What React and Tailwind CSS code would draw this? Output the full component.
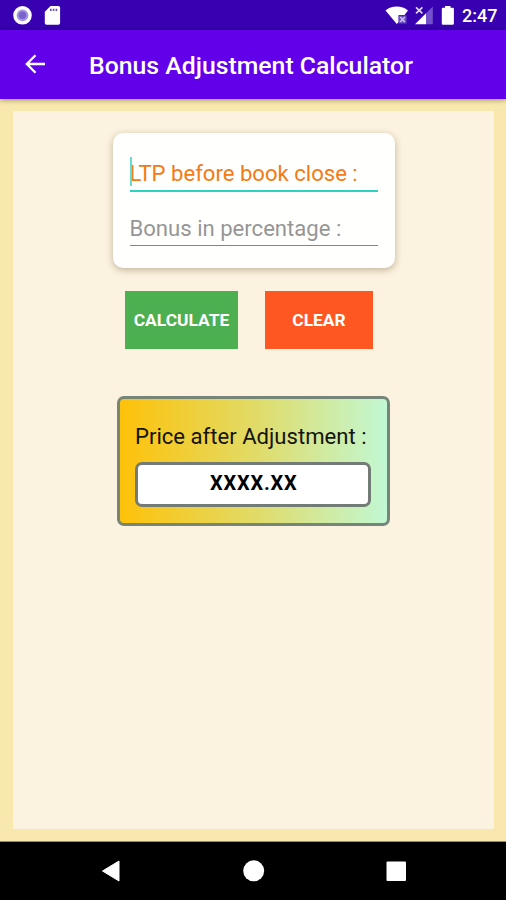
function StatusBar() {
  return (
    <div className="flex h-[30px] shrink-0 items-center bg-[#3700b0] text-white">
      <svg width="90" height="30" viewBox="0 0 90 30">
        <circle cx="22.5" cy="15.3" r="7.6" fill="#a595df" stroke="#fff" strokeWidth="3.4" />
        <circle cx="22.5" cy="15.3" r="3.8" fill="#7a63cc" />
        <path d="M50.5 6h7.8a1.8 1.8 0 0 1 1.8 1.8v15.2a1.8 1.8 0 0 1-1.8 1.8H46.6a1.8 1.8 0 0 1-1.8-1.8V11.7z" fill="#fff" />
        <path d="M50.8 8.8v2.2M53.6 8.8v2.2M56.4 8.8v2.2" stroke="#6a45c4" strokeWidth="1.6" />
      </svg>
      <svg className="ml-auto" width="76" height="30" viewBox="380 0 76 30">
        <path d="M385.5 10.6C391 5 402.5 5 408 10.6L404.5 15H398.5v7.2l-1.7 1.8z" fill="#fff" />
        <path d="M399 15.5h7.5v8H399z" fill="#6d4cc7" />
        <path d="M400.2 17l4.6 5M404.8 17l-4.6 5" stroke="#cdc0ee" strokeWidth="1.6" />
        <path d="M415 24.2L426 13.2v11z" fill="#fff" />
        <path d="M426 13.2L432.8 6.5v17.7H426z" fill="#7351ca" />
        <path d="M416 7.3l6.4 6M422.4 7.3l-6.4 6" stroke="#e4dcf7" strokeWidth="1.6" />
        <path d="M445 6h5.5v1.7h2.2a1.2 1.2 0 0 1 1.2 1.2v14.6a1.2 1.2 0 0 1-1.2 1.2h-9.7a1.2 1.2 0 0 1-1.2-1.2V8.9a1.2 1.2 0 0 1 1.2-1.2h2z" fill="#fff" />
      </svg>
      <span className="ml-[6px] w-[44px] pt-[2px] text-[18px] leading-none font-medium">2:47</span>
    </div>
  );
}

function AppBar() {
  return (
    <div className="z-10 flex h-[68.5px] shrink-0 items-center bg-[#6200ea] pl-[25px] text-white shadow-[0_1px_5px_rgba(0,0,0,0.4)]">
      <svg width="21" height="20" viewBox="0 0 21 20" fill="none" stroke="#fff" strokeWidth="2.3">
        <path d="M20 10H2M10.5 1.2L1.8 10l8.7 8.8" />
      </svg>
      <h1 className="ml-[43px] whitespace-nowrap pt-[3px] text-[24.8px] font-medium">Bonus Adjustment Calculator</h1>
    </div>
  );
}

function BonusForm() {
  return (
    <div className="ml-[99.5px] mt-[21px] h-[135px] w-[282px] rounded-[10px] bg-[#fffffe] px-[17px] pt-6 text-[22.1px] shadow-[0_2px_7px_rgba(90,60,20,0.35)]">
      <div className="relative h-[35px] border-b-2 border-[#2ed3bf] whitespace-nowrap leading-[33px] text-[#f47a14]">
        <span className="absolute left-0 top-0 h-[29px] w-[2px] bg-[#66dccb]" />
        LTP before book close :
      </div>
      <div className="mt-5 h-[34px] border-b border-[#858585] whitespace-nowrap leading-[33px] text-[#969696]">
        Bonus in percentage :
      </div>
    </div>
  );
}

function ResultCard() {
  return (
    <div className="ml-[104px] mt-[47px] h-[130px] w-[273px] rounded-[7px] border-[3px] border-[#75857a] bg-[linear-gradient(90deg,#ffc107,#e1db66_50%,#c1f8d6)] bg-origin-border px-[15px] pt-[22px]">
      <p className="whitespace-nowrap text-[22.1px] leading-[31px] text-[#14140c]">Price after Adjustment :</p>
      <div className="mt-[10px] h-[45px] w-[236px] rounded-[7px] border-[3px] border-[#737b76] bg-white pl-[72px] text-[20px] leading-[36px] font-bold tracking-[0.8px] text-black">
        XXXX.XX
      </div>
    </div>
  );
}

function NavBar() {
  return (
    <div className="flex h-[58px] shrink-0 items-center justify-center bg-black">
      <svg width="506" height="58" viewBox="0 842 506 58" fill="#fff">
        <path d="M102.5 871L119 861v20z" strokeLinejoin="round" stroke="#fff" />
        <circle cx="253.7" cy="870.8" r="10.5" />
        <rect x="386.5" y="861.5" width="19.5" height="19.5" rx="1" />
      </svg>
    </div>
  );
}

export default function App() {
  return (
    <div className="flex h-[900px] w-[506px] flex-col overflow-hidden bg-[#f8e8ad] font-[Roboto,sans-serif]">
      <StatusBar />
      <AppBar />
      <main className="flex-1 border-b border-[#a08c55] pl-[13px] pr-[12px] pt-[12.5px]">
        <div className="h-[718px] bg-[#fbf2df] pt-px">
          <BonusForm />
          <div className="ml-[112px] mt-[22.5px] flex gap-[27px] text-[17.4px] font-bold text-white">
            <button className="h-[58px] w-[113px] bg-[#4caf50] pt-[2px]">CALCULATE</button>
            <button className="h-[58px] w-[108px] bg-[#ff5722] pt-[2px]">CLEAR</button>
          </div>
          <ResultCard />
        </div>
      </main>
      <NavBar />
    </div>
  );
}
